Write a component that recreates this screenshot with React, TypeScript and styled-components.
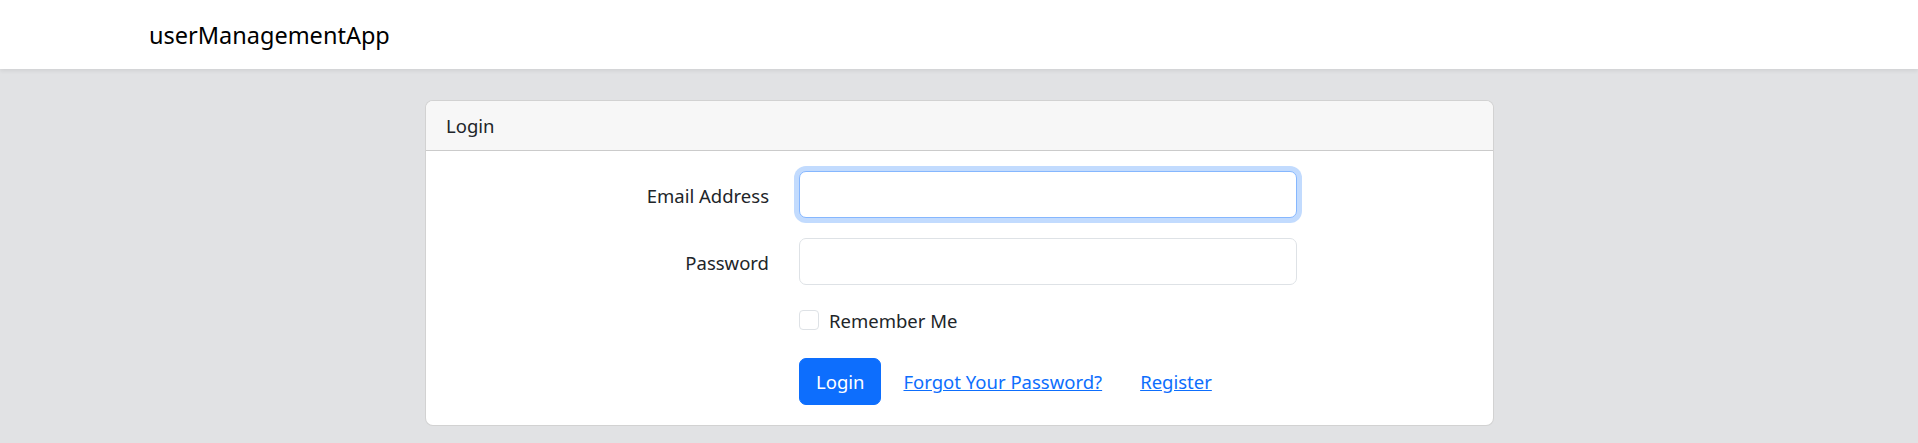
import React from "react";
import styled, { createGlobalStyle } from "styled-components";

const FONT = `"Noto Sans", "Segoe UI", sans-serif`;

const GlobalStyle = createGlobalStyle`
  html, body { margin: 0; padding: 0; }
  body {
    background: #e1e2e4;
    font-family: ${FONT};
    color: #212529;
    font-size: 18.5px;
  }
`;

const Navbar = styled.nav`
  height: 69px;
  background: #ffffff;
  box-shadow: 0 2px 4px rgba(0, 0, 0, 0.075);
  display: flex;
  align-items: center;
  position: relative;
  z-index: 1;
`;

const Container = styled.div`
  max-width: 1650px;
  width: 100%;
  margin: 0 auto;
  padding: 0 15px;
  box-sizing: border-box;
`;

const Brand = styled.a`
  font-size: 23.5px;
  color: #000;
  text-decoration: none;
`;

const Main = styled.main`
  padding-top: 31px;
`;

const Card = styled.div`
  width: 1069px;
  margin-left: calc(50% - 534px);
  background: #fff;
  border: 1px solid rgba(0, 0, 0, 0.175);
  border-radius: 8px;
  box-sizing: border-box;
  overflow: hidden;
`;

const CardHeader = styled.div`
  height: 50px;
  box-sizing: border-box;
  padding: 0 20px;
  display: flex;
  align-items: center;
  background: #f7f7f7;
  border-bottom: 1px solid rgba(0, 0, 0, 0.175);
`;

const CardBody = styled.div`
  padding: 20px;
`;

const FormRow = styled.div<{ $mb?: number }>`
  display: grid;
  grid-template-columns: 323px 498px;
  column-gap: 30px;
  align-items: center;
  margin-bottom: ${(p) => p.$mb ?? 20}px;
`;

const Label = styled.label`
  text-align: right;
  padding-top: 2px;
`;

const Input = styled.input<{ $focused?: boolean }>`
  height: 47px;
  box-sizing: border-box;
  width: 100%;
  margin: 0;
  border: 1px solid ${(p) => (p.$focused ? "#86b7fe" : "#dee2e6")};
  border-radius: 7px;
  padding: 0 15px;
  font-family: ${FONT};
  font-size: 18.5px;
  outline: none;
  background: #fff;
  box-shadow: ${(p) =>
    p.$focused ? "0 0 0 5px rgba(13, 110, 253, 0.25)" : "none"};
`;

const CheckWrap = styled.div`
  grid-column: 2;
  display: flex;
  align-items: flex-start;
  gap: 10px;
  height: 33px;
`;

const Check = styled.input`
  appearance: none;
  margin: 5px 0 0;
  width: 20px;
  height: 20px;
  border: 1px solid #dee2e6;
  border-radius: 4px;
  box-sizing: border-box;
  background: #fff;
  flex: none;
`;

const CheckLabel = styled.label`
  line-height: 32px;
`;

const Actions = styled.div`
  grid-column: 2;
  display: flex;
  align-items: center;
  gap: 6px;
`;

const Button = styled.button`
  height: 47px;
  padding: 0 16px;
  background: #0d6efd;
  border: 1px solid #0d6efd;
  border-radius: 7px;
  color: #fff;
  font-family: ${FONT};
  font-size: 18.5px;
  cursor: pointer;
`;

const LinkBtn = styled.a`
  padding: 0 16px;
  color: #0d6efd;
  text-decoration: underline;
`;

export default function App() {
  return (
    <>
      <GlobalStyle />
      <Navbar>
        <Container>
          <Brand href="#">userManagementApp</Brand>
        </Container>
      </Navbar>
      <Main>
        <Card>
          <CardHeader>Login</CardHeader>
          <CardBody>
            <FormRow>
              <Label htmlFor="email">Email Address</Label>
              <Input id="email" type="email" $focused />
            </FormRow>
            <FormRow>
              <Label htmlFor="password">Password</Label>
              <Input id="password" type="password" />
            </FormRow>
            <FormRow>
              <CheckWrap>
                <Check type="checkbox" id="remember" />
                <CheckLabel htmlFor="remember">Remember Me</CheckLabel>
              </CheckWrap>
            </FormRow>
            <FormRow $mb={0}>
              <Actions>
                <Button type="submit">Login</Button>
                <LinkBtn href="#">Forgot Your Password?</LinkBtn>
                <LinkBtn href="#">Register</LinkBtn>
              </Actions>
            </FormRow>
          </CardBody>
        </Card>
      </Main>
    </>
  );
}
